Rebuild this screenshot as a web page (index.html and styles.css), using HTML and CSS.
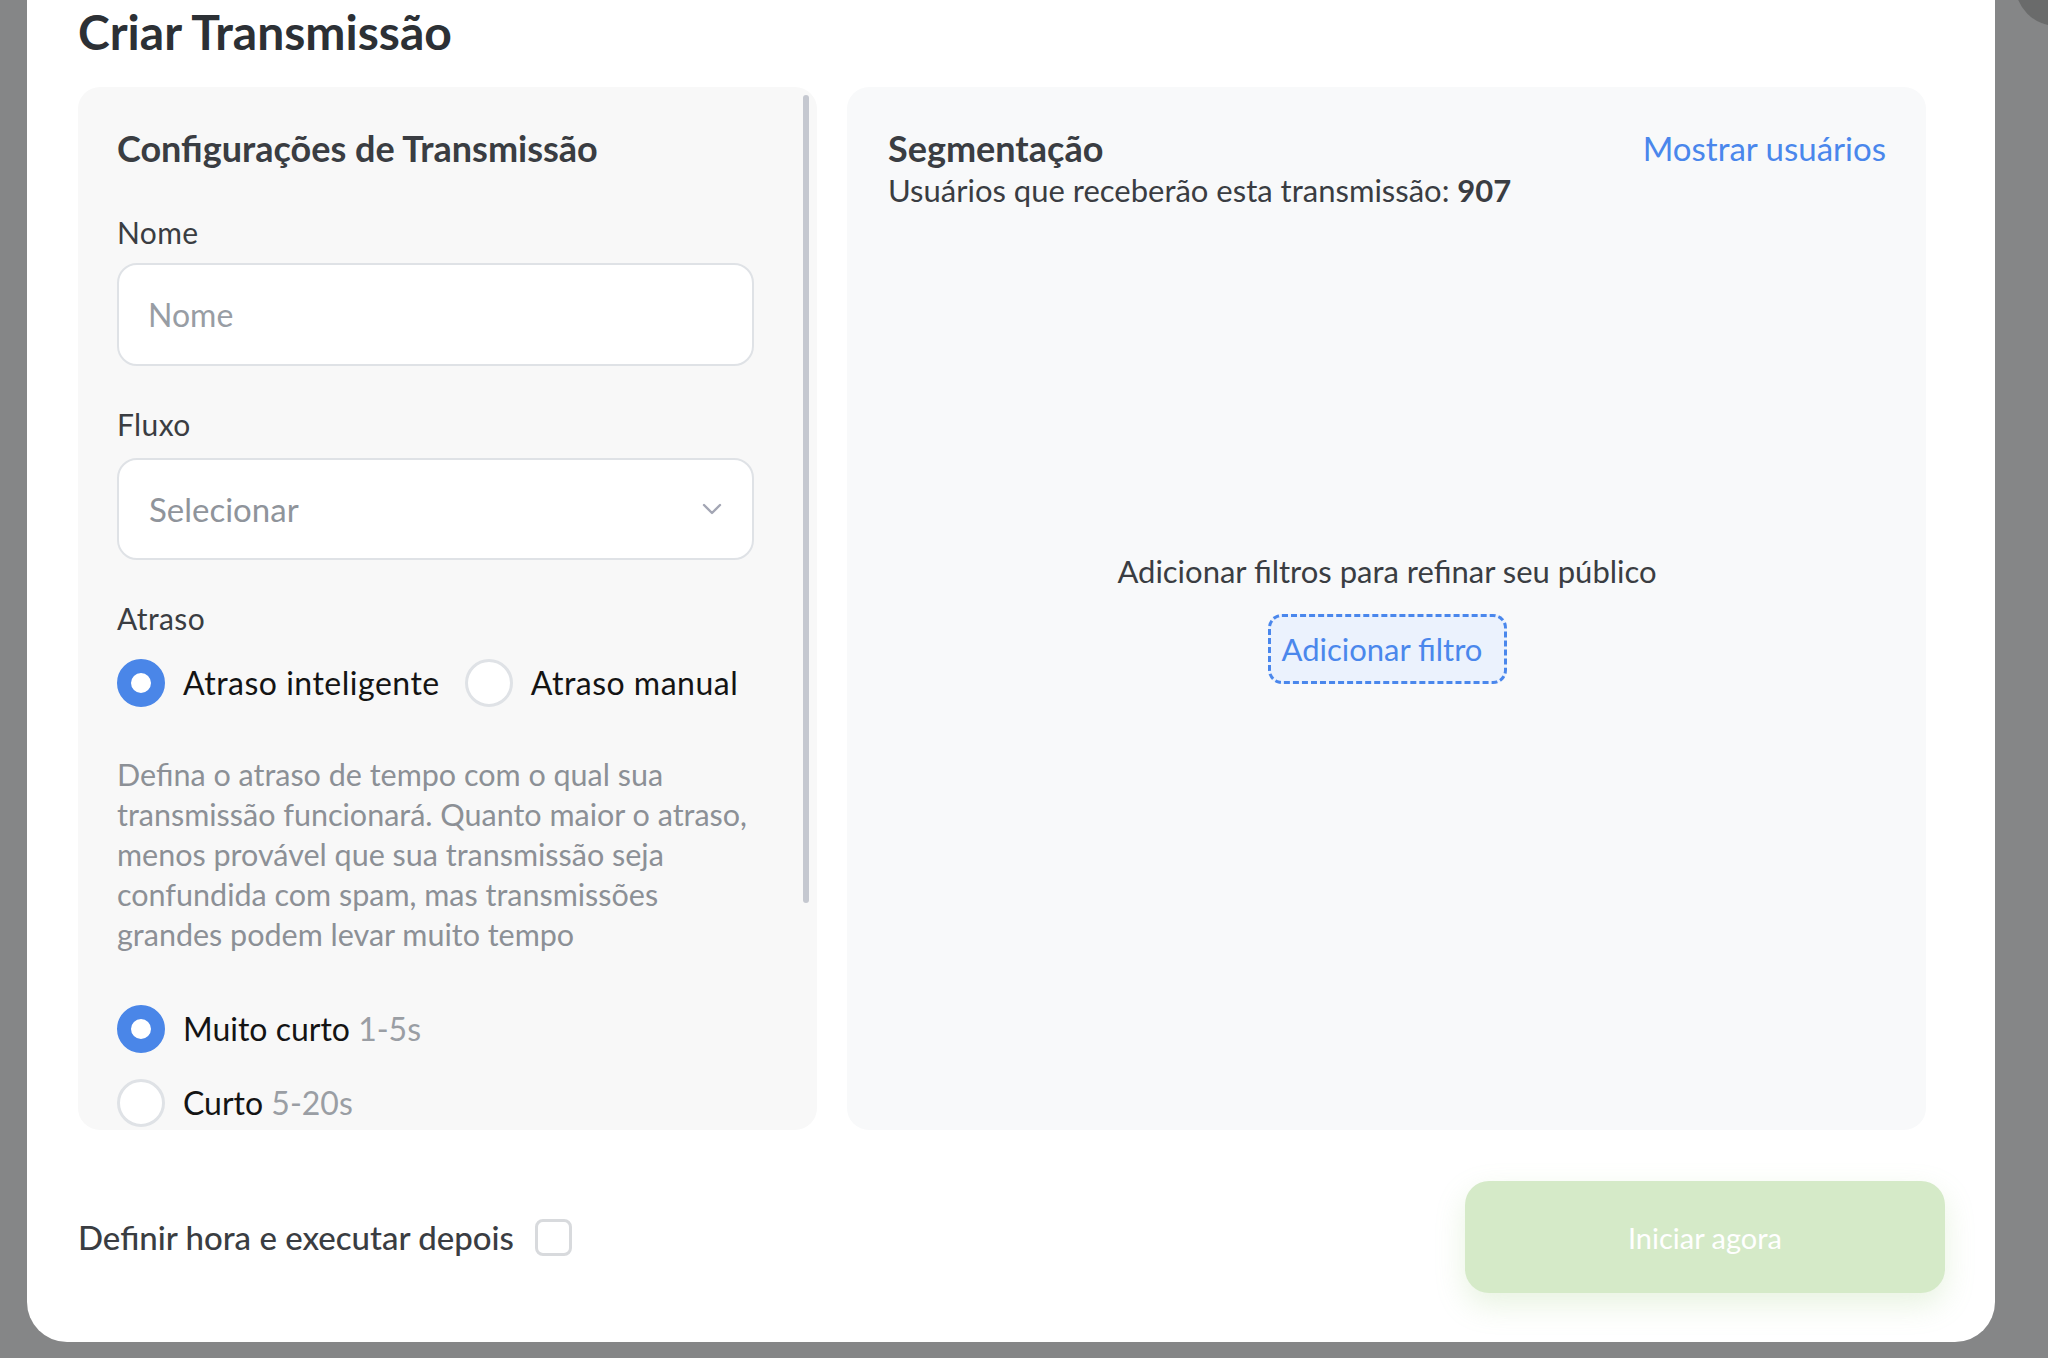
FILE: index.html
```html
<!DOCTYPE html>
<html lang="pt-BR">
<head>
<meta charset="utf-8">
<title>Criar Transmissão</title>
<link rel="stylesheet" href="styles.css">
</head>
<body>
<div class="close-knob"></div>
<div class="modal">
  <h1 class="title">Criar Transmissão</h1>
  <div class="cards">
    <section class="card settings">
      <div class="settings-body">
        <h2 class="card-heading">Configurações de Transmissão</h2>
        <div class="field-label">Nome</div>
        <div class="input"><span class="placeholder">Nome</span></div>
        <div class="field-label gap-top">Fluxo</div>
        <div class="input select">
          <span class="placeholder">Selecionar</span>
          <svg class="chevron" width="20" height="12" viewBox="0 0 20 12"><polyline points="2,2 10,10 18,2" fill="none" stroke="#a3a6b4" stroke-width="2.4" stroke-linecap="round" stroke-linejoin="round"/></svg>
        </div>
        <div class="field-label gap-top">Atraso</div>
        <div class="radio-row">
          <span class="radio checked"></span><span class="radio-text">Atraso inteligente</span>
          <span class="radio second"></span><span class="radio-text">Atraso manual</span>
        </div>
        <p class="desc">Defina o atraso de tempo com o qual sua<br>transmissão funcionará. Quanto maior o atraso,<br>menos provável que sua transmissão seja<br>confundida com spam, mas transmissões<br>grandes podem levar muito tempo</p>
        <div class="options">
          <div class="option"><span class="radio checked"></span><span class="radio-text">Muito curto <span class="range">1-5s</span></span></div>
          <div class="option"><span class="radio"></span><span class="radio-text">Curto <span class="range">5-20s</span></span></div>
        </div>
      </div>
      <div class="scroll-thumb"></div>
    </section>
    <section class="card segment">
      <div class="segment-head">
        <div>
          <h2 class="card-heading">Segmentação</h2>
          <p class="count">Usuários que receberão esta transmissão: <b>907</b></p>
        </div>
        <a class="link">Mostrar usuários</a>
      </div>
      <div class="empty">
        <p class="empty-text">Adicionar filtros para refinar seu público</p>
        <button class="add-filter">Adicionar filtro</button>
      </div>
    </section>
  </div>
  <div class="footer">
    <div class="schedule">Definir hora e executar depois <span class="checkbox"></span></div>
    <button class="start">Iniciar agora</button>
  </div>
</div>
</body>
</html>
```
FILE: styles.css
```css
* { box-sizing: border-box; }
html, body { margin: 0; padding: 0; }
body {
  width: 2048px;
  height: 1358px;
  overflow: hidden;
  background: #858687;
  font-family: "Lato", "Noto Sans", sans-serif;
  position: relative;
}
.close-knob {
  position: absolute;
  left: 2015px;
  top: -58px;
  width: 84px;
  height: 84px;
  border-radius: 50%;
  background: #6a6b6b;
}
.modal {
  margin-left: 27px;
  width: 1968px;
  height: 1342px;
  background: #fff;
  border-radius: 0 0 40px 40px;
  padding: 2px 50px 0 51px;
}
.title {
  margin: 0;
  font-size: 48px;
  line-height: 60px;
  font-weight: 700;
  color: #2c3035;
}
.cards {
  margin-top: 25px;
  display: flex;
  gap: 30px;
  height: 1043px;
}
.card {
  border-radius: 22px;
  position: relative;
  overflow: hidden;
}
.settings {
  width: 739px;
  background: #f8f8f8;
}
.settings-body {
  padding: 37px 63px 0 39px;
}
.segment {
  width: 1079px;
  background: #f8f9fa;
  padding: 37px 40px 0 41px;
}
.card-heading {
  margin: 0;
  font-size: 36px;
  line-height: 48px;
  font-weight: 700;
  color: #3a3d42;
}
.field-label {
  margin-top: 40px;
  font-size: 30px;
  line-height: 40px;
  letter-spacing: 0.4px;
  color: #3a3d42;
}
.field-label.gap-top { margin-top: 38px; }
.input {
  margin-top: 11px;
  height: 103px;
  background: #fff;
  border: 2px solid #dfe2e6;
  border-radius: 20px;
  display: flex;
  align-items: center;
  padding: 0 30px 0 29px;
}
.select {
  margin-top: 14px;
  height: 102px;
  justify-content: space-between;
}
.placeholder {
  font-size: 32px;
  color: #989da4;
}
.select .placeholder { color: #8f949b; margin-left: 1px; font-size: 33px; }
.chevron { display: block; }
.radio-row {
  margin-top: 20px;
  height: 50px;
  display: flex;
  align-items: center;
}
.radio {
  flex: none;
  width: 48px;
  height: 48px;
  border-radius: 50%;
  background: #fff;
  border: 3px solid #dfe2e6;
}
.radio.checked {
  border: 14px solid #4a86e8;
}
.radio.second { margin-left: 25px; }
.radio-text {
  margin-left: 18px;
  font-size: 32px;
  line-height: 40px;
  color: #141414;
  white-space: nowrap;
}
.radio-row .radio-text { letter-spacing: 0.5px; }
.range { color: #9a9ea4; }
.desc {
  margin: 46px 0 0;
  font-size: 30.5px;
  line-height: 40px;
  color: #8c9096;
  white-space: nowrap;
}
.options {
  margin-top: 50px;
  display: flex;
  flex-direction: column;
  gap: 24px;
}
.option {
  height: 50px;
  display: flex;
  align-items: center;
}
.scroll-thumb {
  position: absolute;
  top: 8px;
  right: 8px;
  width: 6px;
  height: 808px;
  border-radius: 3px;
  background: #c5c8d0;
}
.segment-head {
  display: flex;
  justify-content: space-between;
  align-items: flex-start;
}
.count {
  margin: 0;
  font-size: 31px;
  line-height: 36px;
  color: #3a3d42;
}
.count b { font-weight: 700; }
.link {
  font-size: 33px;
  line-height: 48px;
  color: #4a87ec;
  cursor: pointer;
}
.empty {
  display: flex;
  flex-direction: column;
  align-items: center;
}
.empty-text {
  margin: 343px 0 0;
  font-size: 31px;
  line-height: 40px;
  color: #3a3d42;
}
.add-filter {
  margin-top: 23px;
  width: 239px;
  height: 70px;
  border: 3px dashed #4a87ec;
  border-radius: 14px;
  background: #ebf2fd;
  color: #4a87ec;
  font-family: inherit;
  font-size: 31px;
  text-align: left;
  padding: 0 0 0 11px;
}
.footer {
  margin-top: 51px;
  height: 112px;
  display: flex;
  justify-content: space-between;
  align-items: center;
}
.schedule {
  display: flex;
  align-items: center;
  font-size: 33px;
  font-weight: 500;
  color: #3a3d42;
}
.checkbox {
  margin-left: 21px;
  width: 37px;
  height: 37px;
  border: 3px solid #d8dadd;
  border-radius: 8px;
  background: #fff;
}
.start {
  width: 480px;
  height: 112px;
  border: none;
  border-radius: 24px;
  background: #d5eac8;
  color: #fff;
  font-family: inherit;
  font-size: 29px;
  box-shadow: 0 12px 30px rgba(150, 200, 120, 0.22);
}
```
